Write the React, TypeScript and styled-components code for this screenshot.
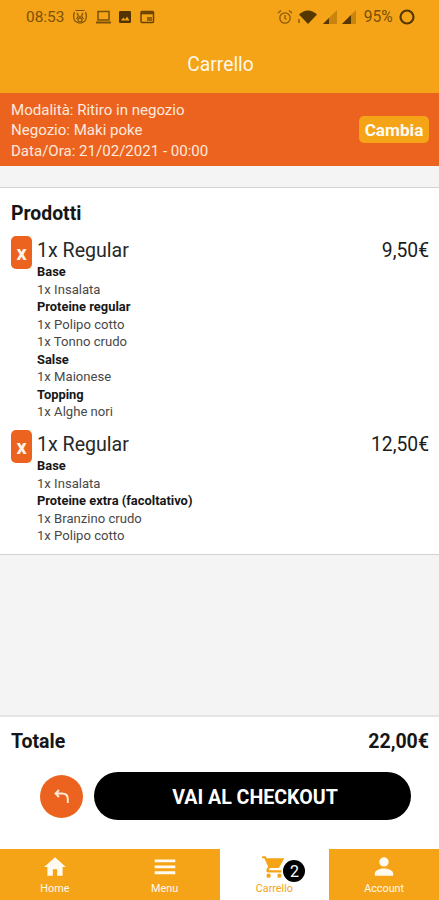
import React from 'react';
import styled, { createGlobalStyle } from 'styled-components';

const amber = '#f5a317';
const orange = '#eb631f';
const statusInk = '#7c5108';

const GlobalStyle = createGlobalStyle`
  * { box-sizing: border-box; }
  body { margin: 0; background: #f4f4f4; font-family: Roboto, "Liberation Sans", sans-serif; }
  button { font-family: inherit; border: 0; padding: 0; margin: 0; }
`;

const Screen = styled.div`
  width: 100%;
  height: 900px;
  display: flex;
  flex-direction: column;
  overflow: hidden;
  background: #f4f4f4;
  color: #161616;
`;

const Header = styled.header`
  height: 93px;
  flex: none;
  background: ${amber};
`;

const StatusBar = styled.div`
  height: 34px;
  padding: 0 24px 0 25px;
  display: flex;
  justify-content: space-between;
  color: ${statusInk};
`;

const StatusGroup = styled.div<{ $gap: number }>`
  display: flex;
  align-items: center;
  gap: ${p => p.$gap}px;
  svg { display: block; }
`;

const StatusText = styled.span<{ $size: number; $gap?: number }>`
  font-size: ${p => p.$size}px;
  line-height: 34px;
  margin: 0 ${p => p.$gap ?? 0}px;
`;

const Title = styled.h1`
  margin: 0;
  padding: 0 0 0 2px;
  line-height: 61px;
  font-size: 19.3px;
  font-weight: 400;
  text-align: center;
  color: #fff8e8;
`;

const OrderInfo = styled.section`
  height: 73px;
  flex: none;
  display: flex;
  align-items: center;
  justify-content: space-between;
  padding: 0 10px 0 11px;
  background: ${orange};
  color: #ffe9dc;
`;

const InfoLines = styled.div`
  font-size: 15.05px;
  line-height: 20.6px;
  padding-top: 2px;
`;

const ChangeButton = styled.button`
  width: 70px;
  height: 27px;
  border-radius: 5px;
  background: ${amber};
  color: #fffaf0;
  font-size: 17.2px;
  font-weight: 700;
  line-height: 29px;
`;

const Products = styled.main`
  height: 368px;
  margin-top: 21px;
  flex: none;
  padding: 12px 10px 0 11px;
  background: #fff;
  border-top: 1px solid #d2d2d2;
  border-bottom: 1px solid #d2d2d2;
`;

const SectionTitle = styled.h2`
  margin: 0 0 8px;
  font-size: 19.4px;
  line-height: 28px;
  font-weight: 700;
`;

const Item = styled.article`
  display: grid;
  grid-template-columns: 21px 1fr auto;
  column-gap: 5px;
  margin-bottom: 9.5px;
`;

const RemoveButton = styled.button`
  width: 21px;
  height: 33px;
  border-radius: 5px;
  background: ${orange};
  color: #fff3e8;
  font-size: 20px;
  font-weight: 700;
  line-height: 32px;
`;

const ItemName = styled.div`
  font-size: 19.6px;
  line-height: 30px;
  height: 27px;
  color: #282828;
`;

const Price = styled(ItemName)`
  font-size: 19.3px;
  color: #1c1c1c;
`;

const Detail = styled.div<{ $heading?: boolean }>`
  font-size: ${p => (p.$heading ? 12.9 : 13.1)}px;
  line-height: 17.5px;
  white-space: nowrap;
  font-weight: ${p => (p.$heading ? 700 : 400)};
  color: ${p => (p.$heading ? '#171717' : '#484848')};
`;

const Footer = styled.section`
  height: 134px;
  margin-top: auto;
  flex: none;
  background: #fff;
  border-top: 2px solid #e5e5e5;
`;

const TotalRow = styled.div`
  display: flex;
  justify-content: space-between;
  padding: 10px 10px 0 11px;
  font-size: 19.5px;
  line-height: 30px;
  font-weight: 700;
`;

const Actions = styled.div`
  display: flex;
  align-items: center;
  gap: 11px;
  margin: 15px 28px 0 40px;
`;

const BackButton = styled.button`
  width: 43px;
  height: 43px;
  border-radius: 50%;
  display: grid;
  place-items: center;
  background: ${orange};
`;

const CheckoutButton = styled.button`
  flex: 1;
  height: 48px;
  border-radius: 24px;
  background: #000;
  color: #fff;
  font-size: 19.6px;
  font-weight: 700;
  padding: 2px 0 0 5px;
`;

const Nav = styled.nav`
  height: 51px;
  flex: none;
  display: grid;
  grid-template-columns: repeat(4, 1fr);
`;

const Tab = styled.a<{ $active?: boolean }>`
  display: flex;
  flex-direction: column;
  align-items: center;
  padding-top: 5px;
  background: ${p => (p.$active ? '#fff' : amber)};
  color: ${p => (p.$active ? amber : '#fffaf0')};
  svg { display: block; }
`;

const TabLabel = styled.span`
  font-size: 10.8px;
  line-height: 14px;
  margin-top: 2px;
`;

const IconWrap = styled.span`
  position: relative;
  height: 26px;
`;

const Badge = styled.span`
  position: absolute;
  left: 22px;
  top: 6px;
  width: 22px;
  height: 22px;
  border-radius: 50%;
  background: #000;
  color: #fff;
  font-size: 16px;
  line-height: 23px;
  text-align: center;
`;

type Group = { name: string; choices: string[] };
type Product = { name: string; price: string; groups: Group[] };

const products: Product[] = [
  {
    name: '1x Regular',
    price: '9,50€',
    groups: [
      { name: 'Base', choices: ['1x Insalata'] },
      { name: 'Proteine regular', choices: ['1x Polipo cotto', '1x Tonno crudo'] },
      { name: 'Salse', choices: ['1x Maionese'] },
      { name: 'Topping', choices: ['1x Alghe nori'] },
    ],
  },
  {
    name: '1x Regular',
    price: '12,50€',
    groups: [
      { name: 'Base', choices: ['1x Insalata'] },
      { name: 'Proteine extra (facoltativo)', choices: ['1x Branzino crudo', '1x Polipo cotto'] },
    ],
  },
];

const tabIcons = {
  home: 'M10 20v-6h4v6h5v-8h3L12 3 2 12h3v8z',
  menu: 'M2.5 5h19v2.6h-19zM2.5 10.5h19v2.6h-19zM2.5 16h19v2.6h-19z',
  cart: 'M1 2h3.300l.95 2H21.500L16.500 13H8.100L7.200 15H19v2H7q-3-.4-1.750-3L6.600 11.600 3 4H1zM7 18a2 2 0 1 1 0 4 2 2 0 0 1 0-4zM17 18a2 2 0 1 1 0 4 2 2 0 0 1 0-4z',
  account: 'M12 11.5c2.4 0 4.3-1.9 4.3-4.2S14.4 3 12 3 7.7 5 7.7 7.3s1.9 4.2 4.3 4.2zm0 1.8c-3.3 0-8.5 1.5-8.5 4.6V20h17v-2.1c0-3.1-5.2-4.6-8.5-4.6z',
};

function TabIcon({ d }: { d: string }) {
  return (
    <svg width="26" height="26" viewBox="0 0 24 24" fill="currentColor">
      <path d={d} />
    </svg>
  );
}

function SignalIcon({ level }: { level: number }) {
  return (
    <svg width="15" height="14" viewBox="0 0 15 14">
      <path d="M0 14L14 0v14z" fill="#c8840f" />
      <path d={`M0 14L${level} ${14 - level}V14z`} fill="#553700" />
    </svg>
  );
}

export default function App() {
  return (
    <>
      <GlobalStyle />
      <Screen>
        <Header>
          <StatusBar>
            <StatusGroup $gap={6.7}>
              <StatusText $size={15.4} $gap={1}>08:53</StatusText>
              <svg width="16" height="16" viewBox="0 0 15 16" fill="none" stroke="currentColor" strokeWidth="1.2">
                <path d="M3 1.5h9M2 3Q0 8 2.5 12l3.5 2h3l3.5-2Q15 8 13 3M4.5 4l1.5 3-2 3m6.5-6L9 7l2 3M7.5 7v3" />
                <circle cx="7.5" cy="11" r="2" />
              </svg>
              <svg width="17" height="14" viewBox="0 0 17 14" fill="none" stroke="currentColor" strokeWidth="1.5">
                <rect x="3" y="1.5" width="11" height="8.5" />
                <path d="M1 12.5h15" strokeWidth="2" />
              </svg>
              <svg width="14" height="14" viewBox="0 0 14 14">
                <rect x="1" y="1" width="12" height="12" rx="1.2" fill="#513400" />
                <path d="M3 10.5l2.3-3 1.7 2 2-3 2.5 4z" fill={amber} />
              </svg>
              <svg width="17" height="14" viewBox="0 0 17 14" fill="none" stroke="#6b4500" strokeWidth="1.5">
                <rect x="2" y="1.5" width="12.5" height="11" rx="1" />
                <path d="M2 3.2h12.5" strokeWidth="2.2" />
                <rect x="8" y="7" width="5" height="4" fill="#96630b" stroke="none" />
              </svg>
            </StatusGroup>
            <StatusGroup $gap={4.8}>
              <svg width="16" height="16" viewBox="0 0 16 16" fill="none" stroke="#8d5c09" strokeWidth="1.3">
                <circle cx="8" cy="9" r="5.2" />
                <path d="M1 4l3-2.5M15 4l-3-2.5M8 6v3.5l1.5 1" />
              </svg>
              <svg width="20" height="14" viewBox="0 0 20 14">
                <path d="M1 4.5Q10-3.5 19 4.5L10 14z" fill="#553700" />
                <path d="M1 9v4" stroke="#a56d0b" strokeWidth="2" />
              </svg>
              <SignalIcon level={6} />
              <SignalIcon level={9} />
              <StatusText $size={15.6} $gap={1.5}>95%</StatusText>
              <svg width="16" height="16" viewBox="0 0 16 16" fill="none" stroke="#553700" strokeWidth="2.2">
                <circle cx="8" cy="8" r="6.5" />
              </svg>
            </StatusGroup>
          </StatusBar>
          <Title>Carrello</Title>
        </Header>

        <OrderInfo>
          <InfoLines>
            <div>Modalità: Ritiro in negozio</div>
            <div>Negozio: Maki poke</div>
            <div>Data/Ora: 21/02/2021 - 00:00</div>
          </InfoLines>
          <ChangeButton>Cambia</ChangeButton>
        </OrderInfo>

        <Products>
          <SectionTitle>Prodotti</SectionTitle>
          {products.map((product, i) => (
            <Item key={i}>
              <RemoveButton>x</RemoveButton>
              <div>
                <ItemName>{product.name}</ItemName>
                {product.groups.map(group => (
                  <React.Fragment key={group.name}>
                    <Detail $heading>{group.name}</Detail>
                    {group.choices.map(choice => (
                      <Detail key={choice}>{choice}</Detail>
                    ))}
                  </React.Fragment>
                ))}
              </div>
              <Price>{product.price}</Price>
            </Item>
          ))}
        </Products>

        <Footer>
          <TotalRow>
            <span>Totale</span>
            <span>22,00€</span>
          </TotalRow>
          <Actions>
            <BackButton aria-label="Indietro">
              <svg width="17" height="17" viewBox="0 0 17 17" fill="none" stroke="#ffe9d8" strokeWidth="1.9">
                <path d="M6 2L2.5 5.5 6 9M2.5 5.5H9q5.8 0 5.8 5.5v4" />
              </svg>
            </BackButton>
            <CheckoutButton>VAI AL CHECKOUT</CheckoutButton>
          </Actions>
        </Footer>

        <Nav>
          <Tab>
            <TabIcon d={tabIcons.home} />
            <TabLabel>Home</TabLabel>
          </Tab>
          <Tab>
            <TabIcon d={tabIcons.menu} />
            <TabLabel>Menu</TabLabel>
          </Tab>
          <Tab $active>
            <IconWrap>
              <TabIcon d={tabIcons.cart} />
              <Badge>2</Badge>
            </IconWrap>
            <TabLabel>Carrello</TabLabel>
          </Tab>
          <Tab>
            <TabIcon d={tabIcons.account} />
            <TabLabel>Account</TabLabel>
          </Tab>
        </Nav>
      </Screen>
    </>
  );
}
